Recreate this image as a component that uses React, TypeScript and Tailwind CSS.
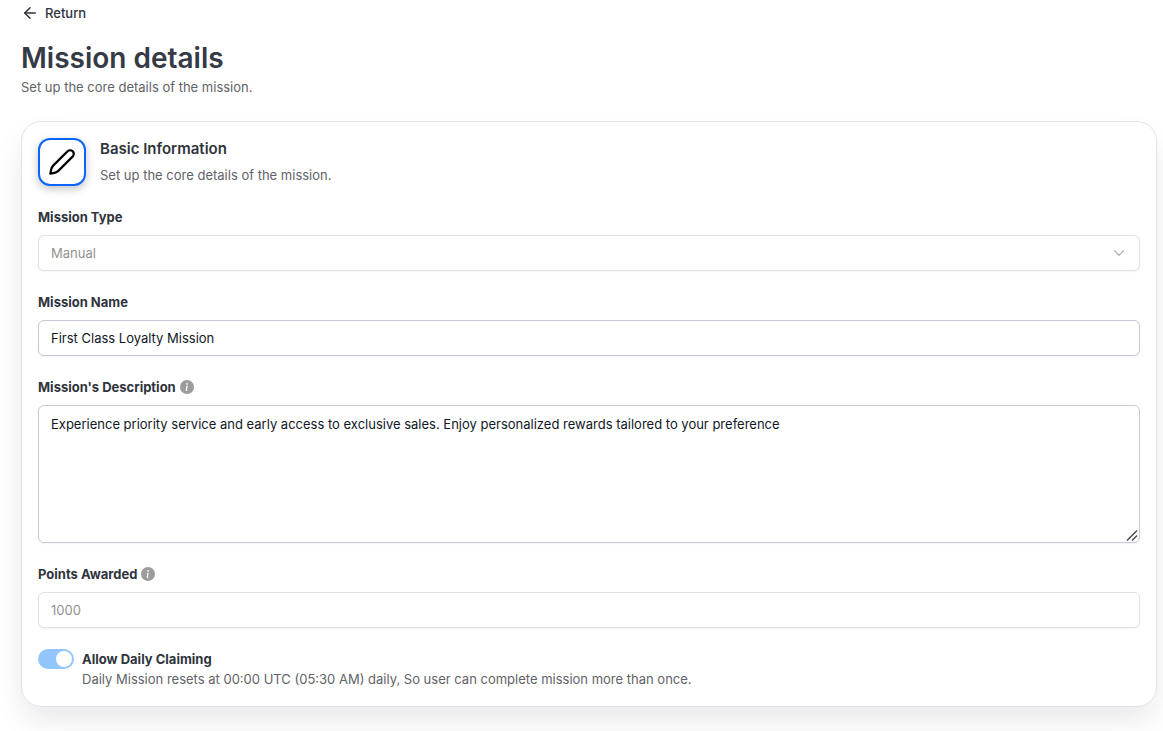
import { useId, useState, type ReactNode } from "react";
import { ArrowLeft, ChevronDown } from "lucide-react";
import { BsInfoCircleFill } from "react-icons/bs";
import { clsx } from "clsx";

const FIELD_CLASS =
  "block w-full rounded-md border bg-white px-3 text-[13px] leading-5 shadow-xs outline-none focus:border-[#0866ff]";

interface FieldProps {
  id: string;
  label: string;
  hint?: string;
  children: ReactNode;
}

function Field({ id, label, hint, children }: FieldProps) {
  return (
    <div className="flex flex-col gap-2">
      <div className="flex items-center gap-1">
        <label htmlFor={id} className="text-[13px] leading-5 font-bold text-[#2f343c]">
          {label}
        </label>
        {hint && (
          <span title={hint} className="text-[#9c9c9c]">
            <BsInfoCircleFill size={14} />
          </span>
        )}
      </div>
      {children}
    </div>
  );
}

function PencilIcon() {
  return (
    <svg
      viewBox="0 0 28 28"
      className="size-7 text-black"
      fill="none"
      stroke="currentColor"
      strokeWidth="2.2"
      strokeLinecap="round"
      strokeLinejoin="round"
      aria-hidden="true"
    >
      <path d="M19.6 3.2 L5.4 17.4 C4.2 18.6 3.5 20 3.2 21.5 L2.3 25.7 L6.5 24.8 C8 24.5 9.4 23.8 10.6 22.6 L24.8 8.4 A3.68 3.68 0 0 0 19.6 3.2 Z" />
    </svg>
  );
}

/** Drawn over the browser's own resize grip, which stays draggable underneath. */
function ResizeGrip() {
  return (
    <svg
      viewBox="0 0 12 12"
      className="pointer-events-none absolute right-0.5 bottom-0.5 size-3 bg-white text-[#4a4a4a]"
      fill="none"
      stroke="currentColor"
      strokeWidth="1.5"
      aria-hidden="true"
    >
      <path d="M1 11.5 11 1.5M6 11.5 11 6.5" />
    </svg>
  );
}

export default function App() {
  const [name, setName] = useState("First Class Loyalty Mission");
  const [description, setDescription] = useState(
    "Experience priority service and early access to exclusive sales. Enjoy personalized rewards tailored to your preference",
  );
  const id = useId();

  return (
    <main className="min-h-screen overflow-hidden bg-white pr-1.5 pb-6 pl-[21px] font-['Inter',sans-serif]">
      <button
        type="button"
        className="flex cursor-pointer items-center gap-1.5 py-[3px] text-[13px] leading-5 font-medium text-[#2f343c]"
      >
        <ArrowLeft size={18} strokeWidth={2} />
        Return
      </button>

      <header className="mt-[13px]">
        <h1 className="text-[28px] leading-[38px] font-semibold text-[#343a46]">Mission details</h1>
        <p className="text-[13px] leading-5 text-[#5f6368]">Set up the core details of the mission.</p>
      </header>

      <section className="mt-6 flex flex-col gap-[21px] rounded-[20px] border border-[#e1e3ec] bg-white p-4 shadow-[0_16px_32px_-4px_rgba(12,12,13,0.1)]">
        <div className="flex items-center gap-3.5">
          <div className="flex size-12 shrink-0 items-center justify-center rounded-xl border-2 border-[#0866ff] bg-white shadow-[0_3px_8px_rgba(0,0,0,0.24)]">
            <PencilIcon />
          </div>
          <div className="-my-0.5">
            <h2 className="text-[15px] leading-[26px] font-semibold text-[#2f343c]">Basic Information</h2>
            <p className="text-[13px] leading-[26px] text-[#5f6368]">Set up the core details of the mission.</p>
          </div>
        </div>

        <Field id={`${id}-type`} label="Mission Type">
          <div className="relative">
            <select
              id={`${id}-type`}
              disabled
              className={clsx(FIELD_CLASS, "h-9 appearance-none border-[#e1e1e6] text-[#929292] opacity-100")}
            >
              <option>Manual</option>
            </select>
            <ChevronDown
              size={18}
              strokeWidth={1.75}
              className="pointer-events-none absolute inset-y-0 right-3 my-auto text-[#b5b5b5]"
            />
          </div>
        </Field>

        <Field id={`${id}-name`} label="Mission Name">
          <input
            id={`${id}-name`}
            type="text"
            value={name}
            onChange={(event) => setName(event.target.value)}
            className={clsx(FIELD_CLASS, "h-9 border-[#c8c8d4] text-[#111827]")}
          />
        </Field>

        <Field id={`${id}-description`} label="Mission's Description" hint="Shown to users on the mission card">
          <div className="relative">
            <textarea
              id={`${id}-description`}
              value={description}
              onChange={(event) => setDescription(event.target.value)}
              className={clsx(FIELD_CLASS, "h-[138px] resize-y border-[#c8c8d4] py-2 text-[#111827]")}
            />
            <ResizeGrip />
          </div>
        </Field>

        <Field id={`${id}-points`} label="Points Awarded" hint="Points given on completion">
          <input
            id={`${id}-points`}
            type="text"
            value="1000"
            disabled
            className={clsx(FIELD_CLASS, "h-9 border-[#e1e1e6] text-[#929292]")}
          />
        </Field>

        <div className="flex items-start gap-2">
          <input
            id={`${id}-daily`}
            type="checkbox"
            role="switch"
            defaultChecked
            disabled
            className="h-5 w-9 shrink-0 appearance-none rounded-full bg-gray-200 p-0.5 before:block before:size-4 before:rounded-full before:bg-white checked:bg-[#93c5fd] checked:before:translate-x-4"
          />
          <div>
            <label htmlFor={`${id}-daily`} className="block text-[13px] leading-5 font-bold text-[#2f343c]">
              Allow Daily Claiming
            </label>
            <p className="text-[13px] leading-[21px] text-[#5f6368]">
              Daily Mission resets at 00:00 UTC (05:30 AM) daily, So user can complete mission more than once.
            </p>
          </div>
        </div>
      </section>
    </main>
  );
}
